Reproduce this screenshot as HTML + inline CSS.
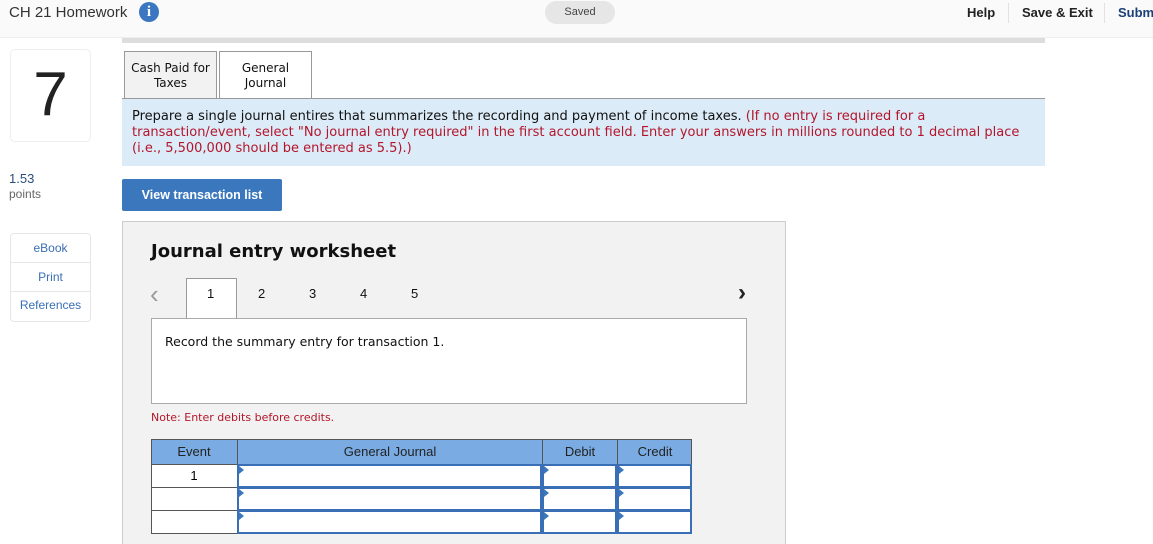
<!DOCTYPE html>
<html style="overflow:hidden"><head><style>
*{margin:0;padding:0;box-sizing:border-box}
html,body{width:1153px;height:544px;overflow:hidden}
body{background:#fff;font-family:"Liberation Sans",sans-serif;position:relative}
.a{position:absolute}
.v{font-family:"DejaVu Sans","Liberation Sans",sans-serif}
.cell{position:absolute;border:2px solid #3a6fb5;background:#fff}
.cell:before{content:"";position:absolute;left:0;top:0;border-left:5px solid #3a77bd;border-top:4px solid transparent;border-bottom:4px solid transparent}
</style></head><body>
<div class="a" style="left:0;top:0;width:1153px;height:38px;background:#fafafa;border-bottom:1px solid #eee"></div>
<div class="a" style="left:9px;top:4px;font-size:15px;color:#333">CH 21 Homework</div>
<div class="a" style="left:139px;top:2px;width:20px;height:20px;border-radius:50%;background:#3a77c0;color:#fff;font:bold 15px 'Liberation Serif',serif;text-align:center;line-height:20px">i</div>
<div class="a" style="left:545px;top:1px;width:70px;height:23px;border-radius:12px;background:#e6e6e6;font-size:11px;color:#444;text-align:center;line-height:22px">Saved</div>
<div class="a" style="left:967px;top:5px;font-size:13px;font-weight:bold;color:#222">Help</div>
<div class="a" style="left:1008px;top:3px;width:1px;height:20px;background:#e2e2e2"></div>
<div class="a" style="left:1022px;top:5px;font-size:13px;font-weight:bold;color:#222">Save &amp; Exit</div>
<div class="a" style="left:1104px;top:3px;width:1px;height:20px;background:#e2e2e2"></div>
<div class="a" style="left:1118px;top:5px;font-size:13px;font-weight:bold;color:#1c3f7a;white-space:nowrap">Submit</div>
<div class="a" style="left:122px;top:38px;width:923px;height:5px;background:#ddd"></div>

<div class="a" style="left:10px;top:49px;width:81px;height:93px;border:1px solid #eee;border-radius:5px;font-size:62px;text-align:center;line-height:90px;color:#222">7</div>
<div class="a" style="left:9px;top:171px;font-size:13px;color:#2b4d7f">1.53</div>
<div class="a" style="left:9px;top:187px;font-size:12px;color:#666">points</div>
<div class="a" style="left:10px;top:233px;width:81px;height:89px;border:1px solid #e6e6e6;border-radius:4px;font-size:12px;color:#3a6fb5;text-align:center">
<div style="height:29px;line-height:28px;border-bottom:1px solid #e6e6e6">eBook</div>
<div style="height:29px;line-height:28px;border-bottom:1px solid #e6e6e6">Print</div>
<div style="line-height:27px">References</div></div>

<div class="a v" style="left:124px;top:51px;width:93px;height:48px;background:#f2f2f2;border:1px solid #999;font-size:12px;text-align:center;padding-top:9px;line-height:15px;color:#111">Cash Paid for<br>Taxes</div>
<div class="a v" style="left:219px;top:51px;width:93px;height:49px;background:#fff;border:1px solid #999;border-bottom:none;font-size:12px;text-align:center;padding-top:9px;line-height:15px;color:#111">General<br>Journal</div>
<div class="a" style="left:122px;top:98px;width:923px;height:1px;background:#999"></div>
<div class="a v" style="left:122px;top:99px;width:923px;height:67px;background:#dcebf8;padding:10px 10px;font-size:13px;line-height:16px;color:#111">Prepare a single journal entires that summarizes the recording and payment of income taxes. <span style="color:#b3162b">(If no entry is required for a transaction/event, select "No journal entry required" in the first account field. Enter your answers in millions rounded to 1 decimal place (i.e., 5,500,000 should be entered as 5.5).)</span></div>
<div class="a" style="left:122px;top:179px;width:160px;height:32px;background:#3a77bd;border-radius:2px;color:#fff;font-size:12.5px;font-weight:bold;text-align:center;line-height:32px">View transaction list</div>

<div class="a" style="left:122px;top:221px;width:664px;height:330px;background:#f2f2f2;border:1px solid #ccc"></div>
<div class="a v" style="left:151px;top:241px;font-size:18px;font-weight:bold;color:#111">Journal entry worksheet</div>
<div class="a" style="left:150px;top:279px;font-size:26px;color:#999">&#8249;</div>
<div class="a" style="left:738px;top:279px;font-size:24px;color:#222;font-weight:bold">&#8250;</div>
<div class="a" style="left:186px;top:278px;width:51px;height:42px;background:#fff;border:1px solid #999;border-bottom:none"></div>
<div class="a" style="left:151px;top:318px;width:596px;height:86px;background:#fff;border:1px solid #aaa"></div>
<div class="a" style="left:186px;top:319px;width:49px;height:2px;background:#fff"></div>
<div class="a" style="top:286px;left:207px;font-size:13px;color:#111">1</div>
<div class="a" style="top:286px;left:258px;font-size:13px;color:#111">2</div>
<div class="a" style="top:286px;left:309px;font-size:13px;color:#111">3</div>
<div class="a" style="top:286px;left:360px;font-size:13px;color:#111">4</div>
<div class="a" style="top:286px;left:411px;font-size:13px;color:#111">5</div>
<div class="a v" style="left:165px;top:334px;font-size:12.5px;color:#111">Record the summary entry for transaction 1.</div>
<div class="a v" style="left:151px;top:411px;font-size:11px;color:#b3162b">Note: Enter debits before credits.</div>

<div class="a" style="left:151px;top:439px;width:541px;height:26px;background:#7aace3;border:1px solid #555"></div>
<div class="a" style="left:151px;top:439px;width:86px;height:26px;text-align:center;line-height:26px;font-size:13px;color:#222">Event</div>
<div class="a" style="left:237px;top:439px;width:305px;height:26px;text-align:center;line-height:26px;font-size:13px;color:#222;border-left:1px solid #555">General Journal</div>
<div class="a" style="left:542px;top:439px;width:75px;height:26px;text-align:center;line-height:26px;font-size:13px;color:#222;border-left:1px solid #555">Debit</div>
<div class="a" style="left:617px;top:439px;width:75px;height:26px;text-align:center;line-height:26px;font-size:13px;color:#222;border-left:1px solid #555">Credit</div>
<div class="a" style="left:151px;top:464px;width:87px;height:70px;background:#fff;border:1px solid #555"></div>
<div class="a" style="left:151px;top:487px;width:87px;height:1px;background:#555"></div>
<div class="a" style="left:151px;top:510px;width:87px;height:1px;background:#555"></div>
<div class="a" style="left:151px;top:468px;width:86px;text-align:center;font-size:13px">1</div>
<div class="cell" style="left:237px;top:464px;width:305px;height:24px"></div>
<div class="cell" style="left:542px;top:464px;width:75px;height:24px"></div>
<div class="cell" style="left:617px;top:464px;width:75px;height:24px"></div>
<div class="cell" style="left:237px;top:487px;width:305px;height:24px"></div>
<div class="cell" style="left:542px;top:487px;width:75px;height:24px"></div>
<div class="cell" style="left:617px;top:487px;width:75px;height:24px"></div>
<div class="cell" style="left:237px;top:510px;width:305px;height:24px"></div>
<div class="cell" style="left:542px;top:510px;width:75px;height:24px"></div>
<div class="cell" style="left:617px;top:510px;width:75px;height:24px"></div>
</body></html>
